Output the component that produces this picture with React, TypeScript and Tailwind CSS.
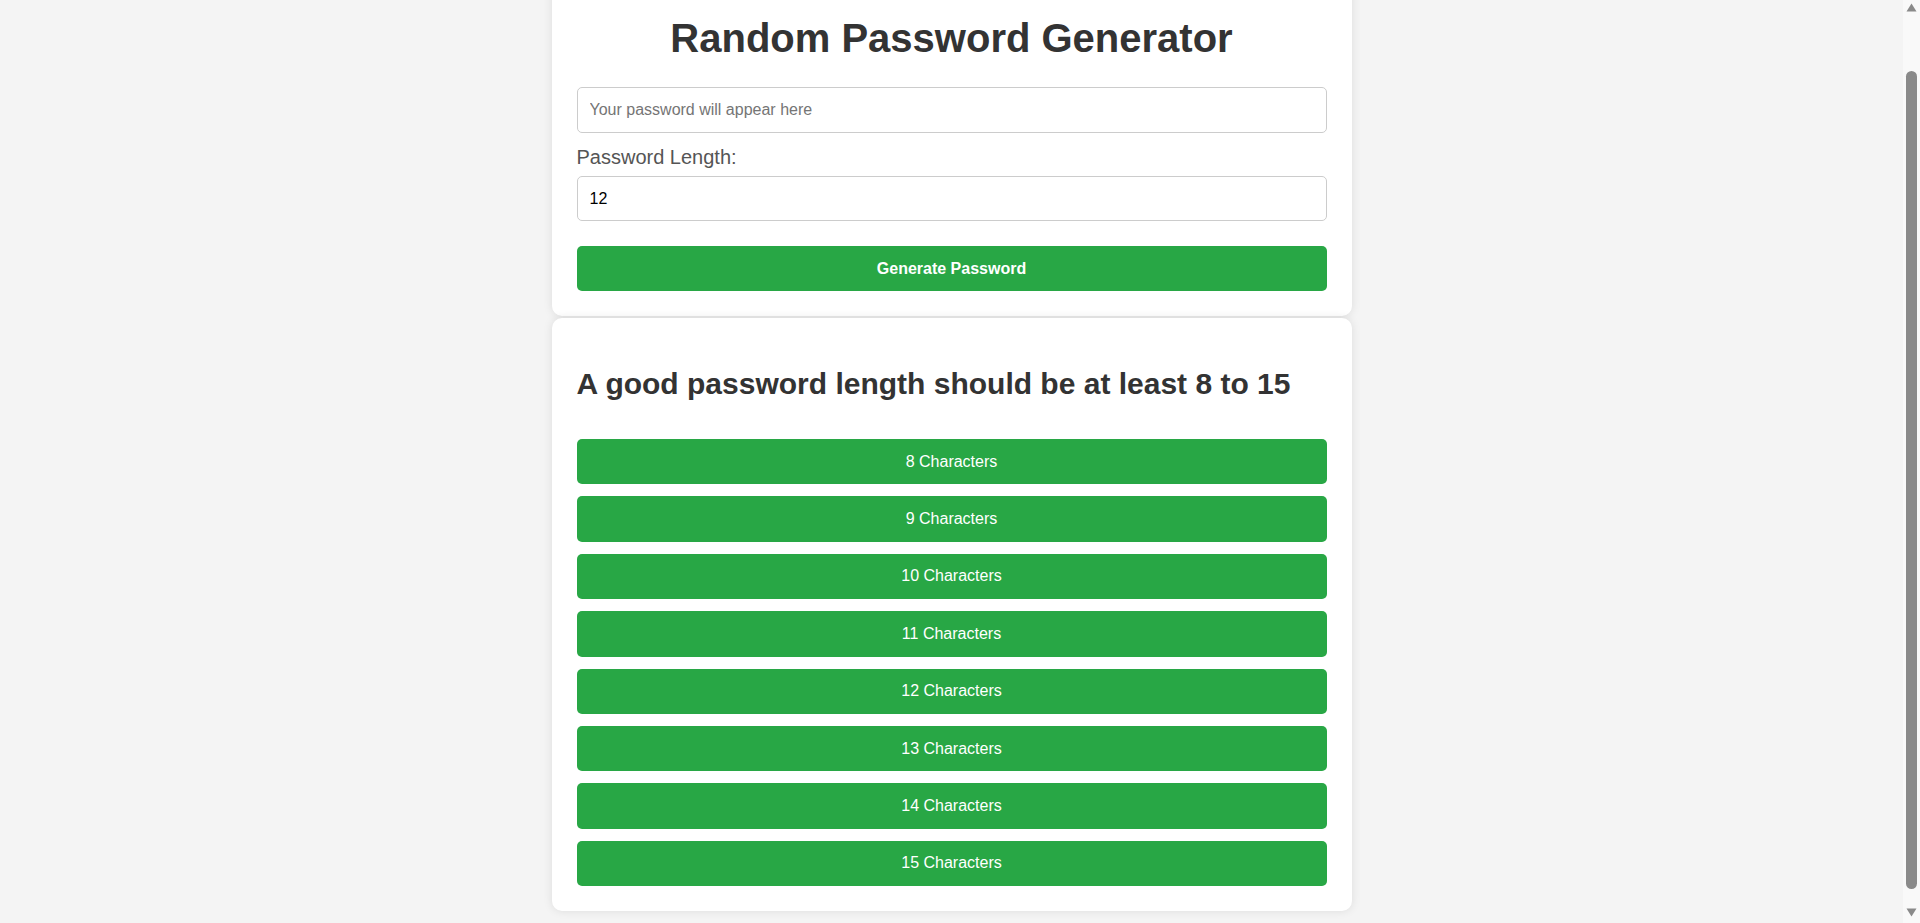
import { useLayoutEffect, useState } from 'react';

const LENGTHS = [8, 9, 10, 11, 12, 13, 14, 15];
const CHARS = 'ABCDEFGHIJKLMNOPQRSTUVWXYZabcdefghijklmnopqrstuvwxyz0123456789!@#$%^&*()_+';

function makePassword(length: number) {
  let out = '';
  for (let i = 0; i < length; i++) {
    out += CHARS[Math.floor(Math.random() * CHARS.length)];
  }
  return out;
}

// stand-in for the browser's scrollbar seen in the reference
function ScrollbarStrip() {
  return (
    <div className="fixed top-0 right-0 w-[17px] h-screen bg-[#f9f9f9] flex flex-col items-center">
      <svg className="mt-[3px] w-[11px] h-[9px] text-[#8a8a8a]" viewBox="0 0 11 9" fill="currentColor">
        <path d="M5.5 0.5 L10.5 8.5 L0.5 8.5 Z" />
      </svg>
      <div className="mt-[59px] w-[11px] h-[818px] rounded-full bg-[#8a8a8a]" />
      <svg className="mt-[19px] w-[11px] h-[9px] text-[#8a8a8a]" viewBox="0 0 11 9" fill="currentColor">
        <path d="M0.5 0.5 L10.5 0.5 L5.5 8.5 Z" />
      </svg>
    </div>
  );
}

export default function App() {
  const [password, setPassword] = useState('');
  const [length, setLength] = useState('12');

  // the reference was captured scrolled a little way down the page
  useLayoutEffect(() => {
    window.scrollTo(0, 61);
  }, []);

  return (
    <div className="min-h-screen bg-[#f4f4f4] pt-[24px] pb-[31px] pr-[17px] font-['Liberation_Sans',Arial,sans-serif]">
      <div className="mx-auto w-[800px] flex flex-col gap-[2px]">
        <div className="bg-white rounded-[10px] shadow-[0_0_10px_rgba(0,0,0,0.1)] p-[25px]">
          <h1 className="mt-[27px] mb-[26px] text-center text-[40px] leading-[46px] font-bold text-[#333]">
            Random Password Generator
          </h1>
          <input
            type="text"
            readOnly
            value={password}
            placeholder="Your password will appear here"
            className="block w-full h-[46px] px-[12px] border border-[#ccc] rounded-[5px] text-[16px] text-black placeholder:text-[#757575] outline-none"
          />
          <label className="block mt-[13px] mb-[7px] text-[20px] leading-[23px] text-[#555]">
            Password Length:
          </label>
          <input
            type="number"
            value={length}
            onChange={(e) => setLength(e.target.value)}
            className="block w-full h-[45px] px-[12px] border border-[#ccc] rounded-[5px] text-[16px] text-black outline-none [appearance:textfield] [&::-webkit-inner-spin-button]:appearance-none"
          />
          <button
            onClick={() => setPassword(makePassword(Number(length) || 12))}
            className="block w-full h-[45px] mt-[25px] rounded-[5px] bg-[#28a745] text-white text-[16px] font-bold cursor-pointer"
          >
            Generate Password
          </button>
        </div>

        <div className="bg-white rounded-[10px] shadow-[0_0_10px_rgba(0,0,0,0.1)] p-[25px]">
          <h2 className="mt-[23px] mb-[38px] text-[30px] leading-[35px] font-bold text-[#333]">
            A good password length should be at least 8 to 15
          </h2>
          <div className="flex flex-col gap-[12px]">
            {LENGTHS.map((n) => (
              <button
                key={n}
                onClick={() => {
                  setLength(String(n));
                  setPassword(makePassword(n));
                }}
                className="block w-full h-[45.4px] rounded-[5px] bg-[#28a745] text-white text-[16px] cursor-pointer"
              >
                {n} Characters
              </button>
            ))}
          </div>
        </div>
      </div>
      <ScrollbarStrip />
    </div>
  );
}
